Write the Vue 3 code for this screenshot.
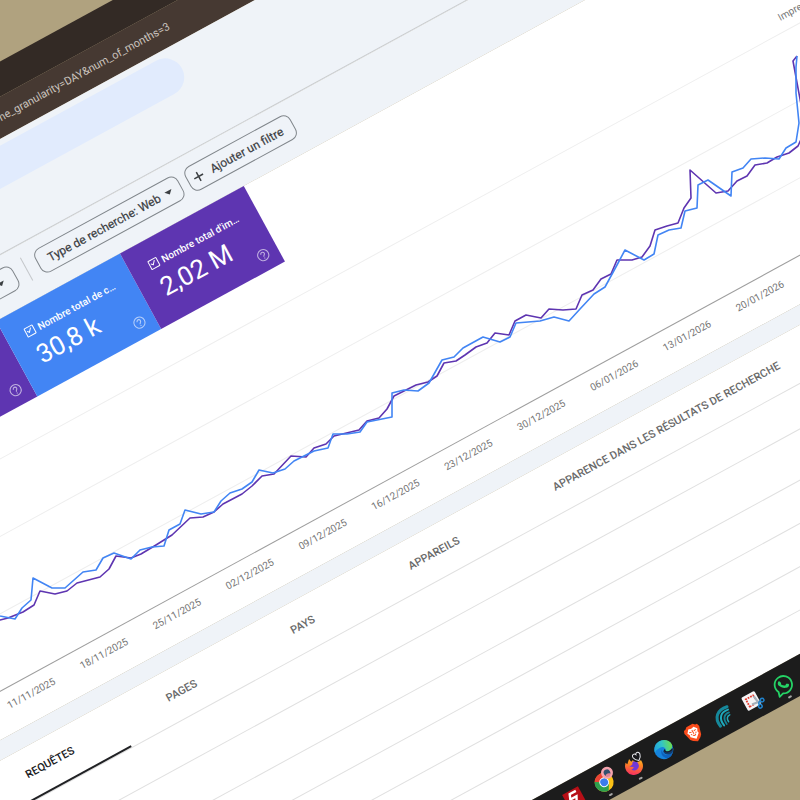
<script setup>
import { ref } from 'vue'

const cards = [
  { id: 'left', tone: 'purple', label: '', value: '' },
  { id: 'clicks', tone: 'blue', label: 'Nombre total de c…', value: '30,8 k' },
  { id: 'impressions', tone: 'purple', label: "Nombre total d'im…", value: '2,02 M' }
]

const dates = [
  '11/11/2025', '18/11/2025', '25/11/2025', '02/12/2025', '09/12/2025', '16/12/2025',
  '23/12/2025', '30/12/2025', '06/01/2026', '13/01/2026', '20/01/2026'
]

const tabs = ['REQUÊTES', 'PAGES', 'PAYS', 'APPAREILS', 'APPARENCE DANS LES RÉSULTATS DE RECHERCHE']
const activeTab = ref('REQUÊTES')

const impressions = [
  [-14, 624], [0, 620], [8, 618], [23, 612], [34, 605], [40, 591], [55, 594], [67, 591], [77, 583],
  [100, 577], [109, 569], [116, 556], [131, 558], [141, 554], [156, 545], [172, 535], [190, 518],
  [203, 517], [214, 512], [223, 504], [242, 494], [252, 486], [262, 476], [274, 474], [291, 456],
  [306, 457], [314, 448], [326, 444], [334, 436], [359, 430], [367, 421], [379, 418], [387, 409],
  [394, 396], [416, 385], [428, 382], [437, 376], [444, 363], [456, 361], [465, 355], [476, 347],
  [487, 343], [495, 333], [509, 335], [515, 321], [526, 315], [541, 318], [549, 309], [563, 310],
  [576, 309], [582, 295], [593, 290], [601, 279], [611, 274], [617, 260], [632, 260], [642, 257],
  [650, 246], [655, 230], [667, 226], [678, 223], [684, 208], [691, 198], [690, 170], [716, 193],
  [728, 191], [737, 181], [747, 176], [755, 165], [767, 163], [777, 157], [789, 153], [798, 146],
  [803, 135], [803, 115], [793, 61], [797, 56]
]

const clicks = [
  [-12, 612], [0, 616], [15, 619], [22, 608], [31, 600], [33, 578], [52, 588], [65, 588], [83, 572],
  [96, 570], [103, 558], [114, 553], [131, 559], [140, 550], [152, 547], [164, 546], [169, 530],
  [180, 524], [185, 510], [201, 514], [214, 512], [221, 501], [230, 493], [242, 489], [252, 482],
  [259, 470], [273, 473], [285, 469], [294, 461], [314, 451], [328, 448], [333, 434], [347, 434],
  [360, 432], [367, 422], [392, 417], [392, 393], [404, 390], [418, 391], [429, 383], [442, 360],
  [454, 357], [463, 348], [483, 337], [500, 342], [510, 337], [516, 323], [540, 321], [554, 317],
  [569, 321], [580, 309], [594, 294], [605, 287], [617, 265], [625, 250], [644, 260], [654, 254],
  [658, 235], [669, 230], [681, 228], [685, 211], [697, 208], [698, 185], [708, 180], [731, 196],
  [732, 172], [743, 168], [751, 159], [765, 158], [779, 159], [786, 148], [796, 142], [799, 123],
  [796, 93], [796, 67], [797, 56]
]

const toPoints = (list) => list.map((p) => p.join(',')).join(' ')
</script>

<template>
  <main class="scene">
    <div class="screen">
      <div class="tabstrip"></div>
      <div class="address">
        <input class="url" aria-label="URL" readonly value="time_granularity=DAY&amp;num_of_months=3" />
      </div>

      <header class="top">
        <div class="search"></div>
      </header>

      <div class="filters">
        <button class="chip chip-first" type="button" aria-label="Date">
          <span class="caret"></span>
        </button>
        <span class="divider"></span>
        <button class="chip chip-type" type="button">
          Type de recherche: Web
          <span class="caret"></span>
        </button>
        <button class="chip chip-add" type="button">
          <svg class="plus" viewBox="0 0 12 12" aria-hidden="true">
            <path d="M6 1v10M1 6h10" fill="none" stroke="#3c4043" stroke-width="1.5" />
          </svg>
          Ajouter un filtre
        </button>
      </div>

      <section class="panel">
        <div class="cards">
          <div v-for="card in cards" :key="card.id" class="card" :class="card.tone">
            <label v-if="card.label" class="card-label">
              <input class="tick" type="checkbox" checked />
              <span>{{ card.label }}</span>
            </label>
            <strong v-if="card.value" class="card-value">{{ card.value }}</strong>
            <svg class="help" viewBox="0 0 14 14" aria-hidden="true">
              <circle cx="7" cy="7" r="5.6" fill="none" stroke="currentColor" stroke-width="1.1" />
              <path d="M5.2 5.7a1.8 1.8 0 1 1 2.8 1.5C7.3 7.700 7 8 7 8.800M7 9.700v1.100" fill="none" stroke="currentColor" stroke-width="1.1" />
            </svg>
          </div>
        </div>

        <div class="axis-title">Impressions</div>
        <svg class="plot" aria-hidden="true">
          <g stroke="#eeeeee" stroke-width="1">
            <line x1="0" y1="0" x2="100%" y2="0" />
            <line x1="0" y1="68" x2="100%" y2="68" />
            <line x1="0" y1="136" x2="100%" y2="136" />
          </g>
          <line x1="0" y1="204" x2="100%" y2="204" stroke="#9e9e9e" stroke-width="1" />
          <g transform="translate(400 -403) rotate(28.6)" fill="none" stroke-width="1.6" stroke-linejoin="round">
            <polyline :points="toPoints(impressions)" stroke="#5e35b1" />
            <polyline :points="toPoints(clicks)" stroke="#4285f4" />
          </g>
        </svg>
        <div class="dates">
          <span v-for="date in dates" :key="date">{{ date }}</span>
        </div>
      </section>

      <div class="band"></div>

      <section class="results">
        <nav class="tabs">
          <button
            v-for="tab in tabs"
            :key="tab"
            type="button"
            class="tab"
            :class="{ active: tab === activeTab }"
            @click="activeTab = tab"
          >{{ tab }}</button>
        </nav>
        <div class="row head"></div>
        <div class="row sub"></div>
        <div class="row"></div>
        <div class="row"></div>
        <div class="row"></div>
        <div class="row last"></div>
      </section>

      <footer class="taskbar">
        <button class="app" type="button" aria-label="App">
          <svg viewBox="0 0 20 20">
            <rect x="1" y="1" width="18" height="18" fill="#b70f17" />
            <path d="M15 4H8L6 9h7l-3 6" fill="none" stroke="#fff" stroke-width="2.4" />
            <path d="M4 12h5" stroke="#fff" stroke-width="2" />
          </svg>
        </button>
        <button class="app running" type="button" aria-label="Chrome">
          <svg viewBox="0 0 20 20">
            <circle cx="10" cy="10" r="9.5" fill="#fbc116" />
            <path d="M10 10 1.8 5.2A9.5 9.5 0 0 1 18.2 5.2H10Z" fill="#ea4335" />
            <path d="M10 10 1.8 5.2A9.5 9.5 0 0 0 10 19.5l4.2-7.2Z" fill="#2da04e" />
            <circle cx="10" cy="10" r="4.9" fill="#fff" />
            <circle cx="10" cy="10" r="3.9" fill="#3b7cec" />
            <circle cx="17" cy="3" r="6" fill="#f4a3ad" />
            <circle cx="17" cy="3" r="3.3" fill="#31506f" />
            <path d="M14 5.500c1.500-2.500 4-2 5.800-.2l-2.600 2.400Z" fill="#e08593" />
          </svg>
        </button>
        <button class="app running" type="button" aria-label="Firefox">
          <svg viewBox="0 0 20 20">
            <defs>
              <linearGradient id="fox" x1="1" y1="0" x2="0.2" y2="1">
                <stop offset="0" stop-color="#ffe23b" />
                <stop offset="0.45" stop-color="#ff8a1f" />
                <stop offset="1" stop-color="#f5246a" />
              </linearGradient>
            </defs>
            <path d="M2.2 5.5 4 3.2l1 2L9 1.500l.5 3.500 6-1.500c2.600 2.300 3.700 4.600 3.400 7.400A9 9 0 0 1 1 11c-.2-2 .3-4 1.200-5.500Z" fill="url(#fox)" />
            <path d="M5.500 8.500 9 8l1.800-2.300c3 .2 4.400 2.300 4 4.900a4.600 4.600 0 0 1-8.800 1.200c1.400.4 2.600 0 3.200-1Z" fill="#7138d6" />
            <circle cx="17" cy="3" r="5.5" fill="#1c1c1c" />
            <path d="M17 7.500c-5-3.300-4.700-7.800-2-8 1 0 1.700.7 2 1.500.3-.8 1-1.500 2-1.500 2.700.2 3 4.700-2 8Z" fill="#17171b" stroke="#e9e9ee" stroke-width="1" />
          </svg>
        </button>
        <button class="app" type="button" aria-label="Edge">
          <svg viewBox="0 0 20 20">
            <defs>
              <linearGradient id="wave" x1="0" y1="0.3" x2="1" y2="0.5">
                <stop offset="0" stop-color="#1e9de0" />
                <stop offset="0.5" stop-color="#32c4c8" />
                <stop offset="1" stop-color="#68dc58" />
              </linearGradient>
            </defs>
            <circle cx="10" cy="10" r="9.5" fill="#1583dc" />
            <path d="M.6 9C1.200 4 5 .5 10 .5c5.600 0 9.500 4 9.500 8 0 3-2.300 5-5.300 5-2 0-3.500-.8-3-1.600 1.600-2 .2-5.500-3.700-5.500C4.300 6.400 1.500 7 .6 9Z" fill="url(#wave)" />
            <path d="M8 9c-2 5 2 9.500 8.700 7.600A9.500 9.500 0 0 1 10 19.500C5.500 18 4.500 12 8 9Z" fill="#0e62bd" />
            <path d="M10.800 10c-1 2.500 1.700 5 7.400 3.700l-1.500 2.800C12 18 8 15 8.600 11Z" fill="#123d71" />
            <path d="M11 9.700c.8 1.600-.6 2 .2 2.800 1.600 1.400 5 1.300 7.300-.2l-.8 2c-4 1.300-8.200-.5-8.200-3.300Z" fill="#1c1c1c" />
          </svg>
        </button>
        <button class="app" type="button" aria-label="Brave">
          <svg viewBox="0 0 20 20">
            <path d="M6.500 1h7l2 1.800 1.900.3 1 3-.6 1.700-1.600 6.400-2 2.200L10 19l-4.200-2.600-2-2.200-1.600-6.400-.6-1.700 1-3 1.900-.3Z" fill="#fb4c1c" />
            <path d="m7 4 3 .8L13 4l2.600 3.200-1.300 2.600.4 2L10 16l-4.700-4.200.4-2-1.300-2.600Z" fill="#fff" />
            <path d="m6.300 7.300 2.500.6M13.700 7.300l-2.500.6M10 6v4.500M8.300 11.300 10 12.400l1.700-1.100M7 9.600l1 1M13 9.600l-1 1" fill="none" stroke="#fb4c1c" stroke-width="1" />
          </svg>
        </button>
        <button class="app" type="button" aria-label="Wave">
          <svg viewBox="0 0 20 20" fill="none" stroke-linecap="round">
            <path d="M18 2.500C8 .5 1 6 3 16.500" stroke="#16899c" stroke-width="3" />
            <path d="M17.500 5.500C10 4 5 8.500 6.500 17.500" stroke="#1fa9bb" stroke-width="2" />
            <path d="M17 8.500C12 7.500 8.500 11 9.500 17.500" stroke="#138194" stroke-width="1.8" />
            <path d="M16.500 11c-3-.3-4.700 2-4.300 5.500" stroke="#22a8b9" stroke-width="1.5" />
          </svg>
        </button>
        <button class="app" type="button" aria-label="Capture">
          <svg viewBox="0 0 20 20">
            <rect x="0.5" y="1.5" width="15" height="15" rx="1.5" fill="#f5f5f7" />
            <path d="M4 14V5h9" fill="none" stroke="#e33a2d" stroke-width="1.8" stroke-dasharray="1.8 1" />
            <path d="M4 13.500h5M12.500 5v4" fill="none" stroke="#e33a2d" stroke-width="1.5" stroke-dasharray="1.8 1" />
            <path d="m12.500 6 1 8M7 12.500l8 1" stroke="#a6b0ba" stroke-width="2.2" />
            <circle cx="18" cy="13.5" r="1.8" fill="none" stroke="#2184cf" stroke-width="1.5" />
            <circle cx="13.5" cy="18" r="1.8" fill="none" stroke="#2184cf" stroke-width="1.5" />
            <path d="m13.500 14 3-.5M13.500 14v2.500" stroke="#2184cf" stroke-width="1.5" />
          </svg>
        </button>
        <button class="app running" type="button" aria-label="WhatsApp">
          <svg viewBox="0 0 20 20">
            <path d="m1 19 1.300-4.700A8.700 8.700 0 1 1 5.600 17.700Z" fill="#1c1c1c" stroke="#25d366" stroke-width="1.8" stroke-linejoin="round" />
            <path d="M6.700 5.200c.6-.5 1.300-.3 1.500.3l.7 1.700c.1.500-.9 1.200-.7 1.600.8 1.500 1.800 2.300 3.200 2.900.5.200 1.100-1.100 1.600-.9l1.700.9c.6.300.4 1.100 0 1.700-.8 1.100-2.200 1.300-3.600.8-2.600-.9-4.600-2.800-5.600-5.200-.5-1.500 0-2.800 1.200-3.800Z" fill="#25d366" />
          </svg>
        </button>
      </footer>
    </div>
  </main>
</template>

<style>
body {
  margin: 0;
  background: #b0a27f;
}
</style>

<style scoped>
.scene {
  height: 100vh;
  overflow: hidden;
  background: #b0a27f;
  font-family: Roboto, "Liberation Sans", sans-serif;
}

.screen {
  width: 145%;
  padding-top: 54px;
  transform-origin: 0 0;
  transform: rotate(-28.6deg) translateX(-400px);
}

button {
  font: inherit;
  margin: 0;
  cursor: pointer;
}

.tabstrip {
  height: 31px;
  background: #332a25;
}

.address {
  display: flex;
  align-items: center;
  height: 37px;
  padding-left: 236px;
  background: #463932;
}

.url {
  width: 300px;
  padding: 0;
  border: 0;
  background: transparent;
  color: #cbc4bf;
  font: 11px Roboto, "Liberation Sans", sans-serif;
  text-align: right;
}

.top {
  box-sizing: border-box;
  height: 102px;
  padding-top: 6px;
  border-bottom: 1px solid #c9cccf;
  background: #eff3f8;
}

.search {
  width: 527px;
  height: 38px;
  border-radius: 0 19px 19px 0;
  background: #e1ebfd;
}

.filters {
  box-sizing: border-box;
  display: flex;
  height: 56px;
  padding: 12px 0 0 162px;
  background: #eff3f8;
}

.chip {
  box-sizing: border-box;
  display: flex;
  align-items: center;
  height: 27px;
  border: 1px solid #80868b;
  border-radius: 8px;
  background: transparent;
  color: #3c4043;
  font-size: 12px;
  white-space: nowrap;
  -webkit-text-stroke: 0.2px #3c4043;
}

.chip-first {
  justify-content: flex-end;
  width: 120px;
  padding: 0 12px;
}

.divider {
  width: 1px;
  height: 26px;
  margin: 0 12px;
  background: #c4c7ca;
}

.chip-type {
  justify-content: space-between;
  width: 163px;
  padding: 0 9px 0 11px;
}

.chip-add {
  gap: 8px;
  margin-left: 8px;
  padding: 0 11px 0 5px;
}

.plus {
  width: 12px;
  height: 12px;
}

.caret {
  border: 4px solid transparent;
  border-top-color: #3c4043;
  border-bottom: 0;
}

.panel,
.results {
  background: #ffffff;
}

.cards {
  display: flex;
  height: 85px;
  padding-left: 102px;
}

.card {
  box-sizing: border-box;
  position: relative;
  width: 141px;
  height: 86px;
  padding: 18px 8px 0 20px;
  color: #ffffff;
}

.purple {
  background: #5e35b1;
}

.blue {
  background: #4285f4;
}

.card-label {
  display: flex;
  align-items: center;
  gap: 4px;
  height: 14px;
  font-size: 10px;
  font-weight: 500;
  white-space: nowrap;
}

.tick {
  appearance: none;
  box-sizing: border-box;
  position: relative;
  width: 10px;
  height: 10px;
  margin: 0;
  border: 1px solid #ffffff;
  border-radius: 1px;
}

.tick:checked::after {
  content: "";
  position: absolute;
  top: 0;
  left: 2px;
  width: 2px;
  height: 4px;
  border: solid #ffffff;
  border-width: 0 1px 1px 0;
  transform: rotate(42deg);
}

.card-value {
  display: block;
  font-size: 26px;
  font-weight: 400;
  line-height: 38px;
  white-space: nowrap;
}

.help {
  position: absolute;
  right: 9px;
  bottom: 9px;
  width: 14px;
  height: 14px;
  opacity: 0.6;
}

.axis-title {
  box-sizing: border-box;
  height: 38px;
  padding: 17px 0 0 1075px;
  color: #757575;
  font-size: 10px;
  line-height: 14px;
  white-space: nowrap;
}

.plot {
  display: block;
  width: 100%;
  height: 205px;
  overflow: visible;
}

.dates {
  box-sizing: border-box;
  display: grid;
  grid-template-columns: repeat(11, 83px);
  height: 42px;
  padding: 9px 0 0 54px;
  color: #757575;
  font-size: 10px;
  line-height: 14px;
  text-align: center;
}

.band {
  height: 18px;
  background: #eff3f8;
}

.tabs {
  display: flex;
  height: 51px;
  border-bottom: 1px solid #e0e0e0;
}

.tab {
  box-sizing: border-box;
  height: 51px;
  padding: 2px 54px 0;
  border: 0;
  border-bottom: 2px solid transparent;
  background: transparent;
  color: #6a6a6a;
  font-size: 11px;
  font-weight: 500;
  white-space: nowrap;
}

.tab:first-child {
  padding: 2px 52px 0;
}

.tab.active {
  border-bottom-color: #202124;
  color: #202124;
}

.row {
  box-sizing: border-box;
  height: 38px;
  border-bottom: 1px solid #e0e0e0;
}

.row.head {
  height: 40px;
}

.row.sub {
  height: 45px;
}

.row.last {
  border-bottom: 0;
}

.taskbar {
  display: flex;
  align-items: center;
  gap: 14px;
  height: 37px;
  padding-left: 512px;
  background: #1c1c1c;
}

.app {
  position: relative;
  width: 20px;
  height: 20px;
  padding: 0;
  border: 0;
  background: transparent;
}

.app svg {
  display: block;
  width: 20px;
  height: 20px;
  overflow: visible;
}

.running::after {
  content: "";
  position: absolute;
  bottom: -5px;
  left: 8px;
  width: 4px;
  height: 2px;
  border-radius: 1px;
  background: #a5a5a5;
}
</style>
